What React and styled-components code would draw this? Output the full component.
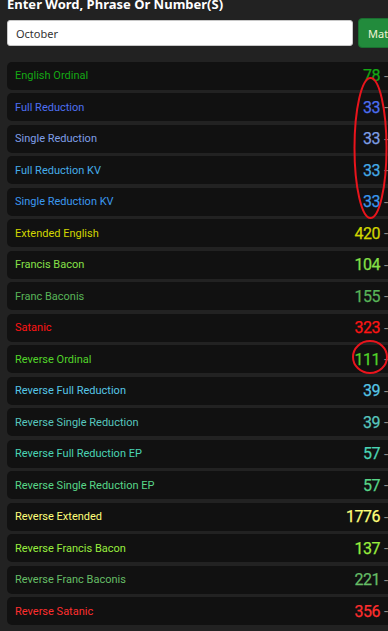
import React from "react";
import styled, { createGlobalStyle } from "styled-components";

const Global = createGlobalStyle`
  html, body { margin: 0; padding: 0; background: #222222; overflow: hidden; }
  body { font-family: Roboto, "Noto Sans", sans-serif; }
`;

const Page = styled.div`
  position: relative;
  width: 440px;
  height: 631px;
  padding: 0 0 0 7px;
  box-sizing: border-box;
`;

const Title = styled.h1`
  margin: -4px 0 0 0;
  font-family: "Noto Sans", sans-serif;
  font-size: 13px;
  line-height: 16px;
  font-weight: 700;
  color: #ffffff;
`;

const SearchBar = styled.div`
  display: flex;
  align-items: center;
  gap: 5px;
  margin-top: 6px;
`;

const Input = styled.input`
  width: 346px;
  height: 26px;
  box-sizing: border-box;
  border: 1px solid #c8c8c8;
  border-radius: 3px;
  padding: 0 8px;
  font-family: "Noto Sans", sans-serif;
  font-size: 11px;
  color: #333;
  background: #fff;
  outline: none;
`;

const Button = styled.button`
  height: 30px;
  width: 70px;
  border: 1px solid #1a6f30;
  border-radius: 4px;
  background: #228b3c;
  color: #f3f3d6;
  font-family: "Noto Sans", sans-serif;
  font-size: 11px;
  text-align: left;
  padding: 0 0 0 9px;
`;

const List = styled.div`
  display: flex;
  flex-direction: column;
  gap: 3.5px;
  margin-top: 13.5px;
`;

const Row = styled.div`
  display: flex;
  align-items: center;
  height: 28px;
  border-radius: 5px;
  background: #111111;
  padding: 0 8px 0 8px;
  white-space: nowrap;
`;

const Label = styled.span`
  flex: 1;
  font-size: 11px;
  color: ${(p) => p.$c};
`;

const Value = styled.span`
  font-size: 16px;
  letter-spacing: -0.5px;
  font-weight: 400;
  -webkit-text-stroke: 0.25px ${(p) => p.$c};
  color: ${(p) => p.$c};
`;

const Extra = styled.span`
  width: 48px;
  padding-left: 4px;
  font-size: 15.5px;
  color: #8a8a8a;
`;

const Marks = styled.svg`
  position: absolute;
  left: 0;
  top: 0;
  pointer-events: none;
`;

const rows = [
  ["English Ordinal", "78", "#14a814"],
  ["Full Reduction", "33", "#4d6ff2"],
  ["Single Reduction", "33", "#7f9fe6"],
  ["Full Reduction KV", "33", "#45ace8"],
  ["Single Reduction KV", "33", "#3b98ee"],
  ["Extended English", "420", "#d2d600"],
  ["Francis Bacon", "104", "#86e048"],
  ["Franc Baconis", "155", "#58b458"],
  ["Satanic", "323", "#ff1414"],
  ["Reverse Ordinal", "111", "#52d42a"],
  ["Reverse Full Reduction", "39", "#56c6e6"],
  ["Reverse Single Reduction", "39", "#58c6be"],
  ["Reverse Full Reduction EP", "57", "#4ad4b4"],
  ["Reverse Single Reduction EP", "57", "#58d688"],
  ["Reverse Extended", "1776", "#ffff7a"],
  ["Reverse Francis Bacon", "137", "#98ee3e"],
  ["Reverse Franc Baconis", "221", "#66bd66"],
  ["Reverse Satanic", "356", "#ff2e2e"],
  ["Jewish", "0", "#cccccc"],
];

export default function App() {
  return (
    <>
      <Global />
      <Page>
        <Title>Enter Word, Phrase Or Number(S)</Title>
        <SearchBar>
          <Input defaultValue="October" />
          <Button>Match</Button>
        </SearchBar>
        <List>
          {rows.map(([l, v, c]) => (
            <Row key={l}>
              <Label $c={c}>{l}</Label>
              <Value $c={c}>{v}</Value>
              <Extra>- 0</Extra>
            </Row>
          ))}
        </List>
        <Marks width="388" height="631" viewBox="0 0 388 631">
          <ellipse cx="370.5" cy="152" rx="16" ry="70" fill="none" stroke="#e8141c" strokeWidth="2" />
          <ellipse cx="370" cy="361" rx="17" ry="16" fill="none" stroke="#e8141c" strokeWidth="2" />
        </Marks>
      </Page>
    </>
  );
}
